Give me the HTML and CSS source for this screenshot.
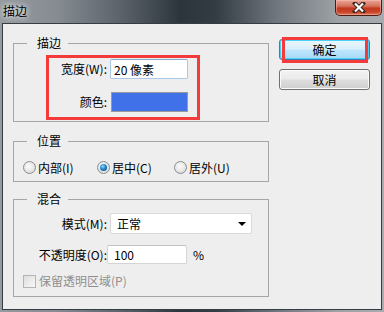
FILE: index.html
```html
<!DOCTYPE html>
<html>
    <head>
        <meta charset="utf-8">
        <title>描边</title>
        <link rel="stylesheet" href="styles.css">
    </head>
    <body>
        <div class="titlebar">
            <span class="caption">描边</span>
            <button class="close" title="关闭">
                <svg width="16" height="11" viewBox="0 0 16 11"><path d="M4 1.5 L12 9.5 M12 1.5 L4 9.5" stroke="#3b2622" stroke-width="4.2" stroke-linecap="square"/><path d="M4 1.5 L12 9.5 M12 1.5 L4 9.5" stroke="#fff" stroke-width="2.2"/></svg>
            </button>
        </div>
        <div class="client">
            <div class="left">
                <fieldset class="group g-stroke">
                    <legend>描边</legend>
                    <div class="mark form">
                        <label>宽度(W):</label>
                        <input class="text width-input" type="text" value="20 像素" readonly>
                        <label>颜色:</label>
                        <span class="swatch"></span>
                    </div>
                </fieldset>
                <fieldset class="group g-pos">
                    <legend>位置</legend>
                    <div class="radios">
                        <span class="opt"><span class="radio"></span>内部(I)</span>
                        <span class="opt"><span class="radio on"></span>居中(C)</span>
                        <span class="opt"><span class="radio"></span>居外(U)</span>
                    </div>
                </fieldset>
                <fieldset class="group g-blend">
                    <legend>混合</legend>
                    <div class="row r-mode">
                        <label>模式(M):</label>
                        <div class="select"><span>正常</span><span class="arrow"></span></div>
                    </div>
                    <div class="row r-opacity">
                        <label>不透明度(O):</label>
                        <input class="text opacity-input" type="text" value="100" readonly>
                        <span class="pct">%</span>
                    </div>
                    <div class="row r-check">
                        <span class="check"></span>
                        <span class="disabled">保留透明区域(P)</span>
                    </div>
                </fieldset>
            </div>
            <div class="right">
                <div class="marked-btn">
                    <button class="btn default">确定</button>
                </div>
                <button class="btn">取消</button>
            </div>
        </div>
    </body>
</html>
```

FILE: styles.css
```css
html {color:#000;}
body {margin:0;padding:0;width:384px;height:312px;overflow:hidden;display:flex;flex-direction:column;
    font-family:"Noto Sans CJK SC","Liberation Sans",sans-serif;font-size:12px;
    background:linear-gradient(90deg,#969b9f 0%,#858b91 15%,#5a6169 32%,#2c343c 47%,#333b43 56%,#6f767d 72%,#9ea2a6 88%,#a8acb0 100%);}

.titlebar {height:23px;display:flex;justify-content:space-between;align-items:flex-start;}
.caption {padding:3px 0 0 3px;line-height:16px;text-shadow:0 0 5px #fff,0 0 8px rgba(255,255,255,.7);}
.close {width:47px;height:16px;margin:0 2px 0 0;padding:0;border:1px solid #4b1d16;border-top:none;border-radius:0 0 5px 5px;
    display:flex;align-items:center;justify-content:center;
    background:linear-gradient(#e8a696 0%,#d7735f 40%,#c2391f 55%,#c9442a 80%,#de7a58 100%);
    box-shadow:inset 0 0 0 1px rgba(255,200,190,.45);}

.client {flex:1;margin:0 2px 2px 2px;border:1px solid #353c44;background:#eeeeee;display:flex;}
.left {width:256px;margin-left:10px;padding-top:11px;}
.right {width:91px;margin-left:10px;padding-top:15px;display:flex;flex-direction:column;gap:9px;}

.group {margin:0;padding:0;border:1px solid #a6a6a6;min-width:0;}
.group legend {margin-left:13px;padding:0 7px 0 10px;line-height:16px;font-size:12px;}
.g-pos {margin-top:11px;}
.g-blend {margin-top:9px;}

/* red annotation box */
.mark {border:3px solid #f33b3b;}
.g-stroke {padding:4px 0 1px 0;}
.form {width:148px;margin-left:32px;display:grid;grid-template-columns:58px 78px;column-gap:3px;row-gap:13px;align-items:center;padding:1px 0 5px 0;}
.form label {text-align:right;line-height:16px;}

.text {box-sizing:border-box;margin:0;font:inherit;color:#000;background:#fff;outline:none;border-radius:2px;}
.width-input {width:78px;height:20px;padding:0 3px;border:1px solid #a9c7e6;border-top-color:#86a9cf;}
.swatch {display:block;width:77px;height:20px;box-sizing:border-box;margin-left:1px;border:1px solid #9a9a9a;background:#4171e9;}

.radios {display:grid;grid-template-columns:74px 77px auto;padding:12px 0 7px 9px;}
.opt {display:flex;align-items:center;gap:2px;height:13px;line-height:13px;}
.radio {width:13px;height:13px;box-sizing:border-box;border:1px solid #8c8d8e;border-radius:50%;display:grid;place-items:center;
    background:radial-gradient(circle at 45% 40%,#fdfdfd 0%,#e6e6e6 55%,#c9c9c9 100%);}
.radio.on::after {content:"";width:7px;height:7px;border-radius:50%;
    background:radial-gradient(circle at 40% 35%,#8fdcff 0%,#2384cc 45%,#0b3e6e 100%);}

.g-blend {padding:6px 0 7px 0;}
.row {display:flex;align-items:center;}
.row label {width:93px;text-align:right;line-height:16px;}
.r-mode {height:21px;}
.select {box-sizing:border-box;width:142px;height:21px;margin-left:3px;border:1px solid #d9d9d9;border-radius:2px;background:#fff;
    display:flex;align-items:center;justify-content:space-between;padding:0 5px 0 6px;}
.arrow {width:0;height:0;border-left:4px solid transparent;border-right:4px solid transparent;border-top:4px solid #000;}
.r-opacity {margin-top:11px;height:19px;}
.opacity-input {width:80px;height:19px;padding:0 6px;border:1px solid #d4d4d4;border-top-color:#c2c2c2;}
.pct {margin-left:6px;}
.r-check {margin-top:9px;height:16px;padding-left:9px;gap:3px;}
.check {width:13px;height:13px;box-sizing:border-box;border:1px solid #b4b4b4;background:linear-gradient(135deg,#dedede,#f8f8f8);}
.disabled {color:#8e8e8e;line-height:16px;}

.btn {box-sizing:border-box;width:91px;height:21px;margin:0;padding:0;font:inherit;color:#000;line-height:18px;
    border:1px solid #707070;border-radius:3px;
    background:linear-gradient(#f3f3f3 0%,#ebebeb 48%,#dddddd 52%,#cfcfcf 100%);
    box-shadow:inset 0 0 0 1px #fbfbfb;}
.btn.default {border-color:#3c7fb1;
    background:linear-gradient(#eaf6fd 0%,#d9f0fc 48%,#bee6fd 52%,#a7d9f5 100%);
    box-shadow:inset 0 0 0 1px #48d1f8;}
.marked-btn {position:relative;height:21px;}
.marked-btn::after {content:"";position:absolute;left:3px;right:2px;top:-2px;bottom:-3px;border:3px solid #f33b3b;pointer-events:none;}
```
